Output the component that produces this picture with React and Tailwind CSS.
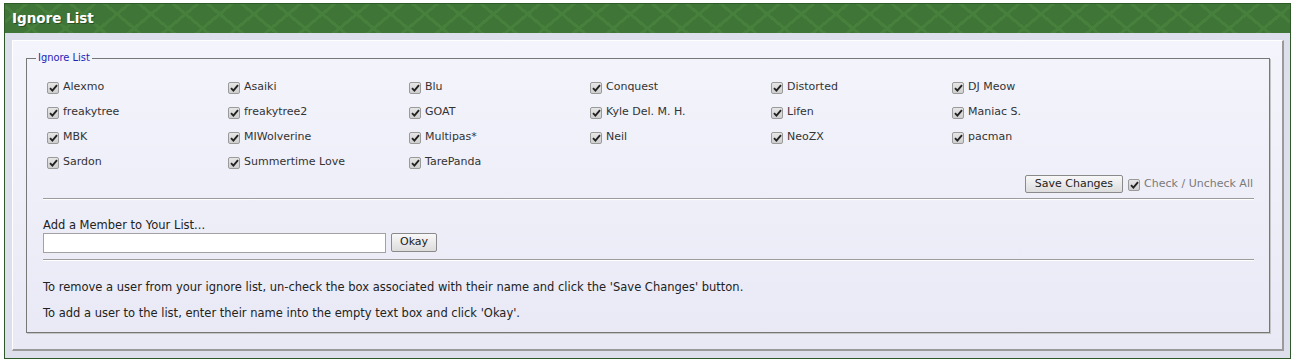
import React from 'react';

const names = [
    'Alexmo', 'Asaiki', 'Blu', 'Conquest', 'Distorted', 'DJ Meow',
    'freakytree', 'freakytree2', 'GOAT', 'Kyle Del. M. H.', 'Lifen', 'Maniac S.',
    'MBK', 'MIWolverine', 'Multipas*', 'Neil', 'NeoZX', 'pacman',
    'Sardon', 'Summertime Love', 'TarePanda',
];

function Check() {
    return (
        <span className="flex items-center justify-center w-[12px] h-[12px] shrink-0 rounded-[2px] border border-[#9a9a9a] bg-[linear-gradient(#e6e6e6,#cfcfcf)]">
            <svg width="9" height="8" viewBox="0 0 9 8">
                <path d="M1 4.2 L3.4 6.6 L8 1.2" fill="none" stroke="#222" strokeWidth="1.9" />
            </svg>
        </span>
    );
}

export default function App() {
    return (
        <div className="w-[1294px] h-[359px] bg-white pt-[3px] pl-[4px] font-['DejaVu_Sans',sans-serif]">
            <div className="w-[1287px] border border-[#2d5a27]">
                <div className="h-[29px] flex items-center pl-[7px] bg-[#3f7536] bg-[image:repeating-linear-gradient(40deg,transparent_0_19px,#477f3d_19px_22px),repeating-linear-gradient(-40deg,transparent_0_19px,#477f3d_19px_22px)]">
                    <span className="text-white font-bold text-[13.5px] [text-shadow:1px_1px_0_#2a4f24]">Ignore List</span>
                </div>
                <div className="bg-[#dde0ec] pt-[7px] pl-[7px] pr-[6px] pb-[7px]">
                    <div className="border-t border-l border-white border-r-2 border-b-2 border-r-[#9a9a9a] border-b-[#9a9a9a] bg-[linear-gradient(#f4f4fc,#e8e9f5)] pt-[9px] pl-[13px] pr-[12px] pb-[16px]">
                        <fieldset className="border border-[#777] shadow-[1px_1px_0_#c4c4c4] pl-[16px] pr-[15px] pb-[12px] pt-[14px]">
                            <legend className="-ml-[7px] px-[2px] text-[11px] text-[#2323b8] font-['DejaVu_Sans_Condensed','DejaVu_Sans',sans-serif]">Ignore List</legend>
                            <div className="grid grid-cols-[repeat(6,181px)] gap-y-[11px] pl-[4px]">
                                {names.map((n) => (
                                    <label key={n} className="flex items-center gap-[4px] h-[14px] text-[11px] text-[#333]">
                                        <Check />
                                        {n}
                                    </label>
                                ))}
                            </div>
                            <div className="flex items-center justify-end gap-[5px] mt-[5px] h-[18px] pr-[1px]">
                                <button className="h-[18px] px-[9px] text-[11px] text-[#222] border border-[#8a8a8a] rounded-[2px] bg-[linear-gradient(#f8f8f8,#dcdcdc)]">Save Changes</button>
                                <span className="flex items-center gap-[4px] text-[11px] text-[#7a7a7a] mt-[2px]">
                                    <Check />
                                    Check / Uncheck All
                                </span>
                            </div>
                            <div className="mt-[5px] border-t border-[#9c9c9c] shadow-[0_1px_0_#fff]" />
                            <div className="mt-[20px] text-[11.5px] text-[#222] leading-[13px]">Add a Member to Your List...</div>
                            <div className="flex items-center gap-[5px] mt-[1px]">
                                <input type="text" className="w-[343px] h-[20px] bg-white border border-[#a2a2a2] outline-none" />
                                <button className="h-[19px] px-[8px] text-[11px] text-[#222] border border-[#8a8a8a] rounded-[2px] bg-[linear-gradient(#f8f8f8,#dcdcdc)]">Okay</button>
                            </div>
                            <div className="mt-[6px] border-t border-[#9c9c9c] shadow-[0_1px_0_#fff]" />
                            <div className="mt-[20px] text-[11.5px] text-[#222] leading-[14px] flex flex-col gap-[12px]">
                                <p>To remove a user from your ignore list, un-check the box associated with their name and click the 'Save Changes' button.</p>
                                <p>To add a user to the list, enter their name into the empty text box and click 'Okay'.</p>
                            </div>
                        </fieldset>
                    </div>
                </div>
            </div>
        </div>
    );
}
